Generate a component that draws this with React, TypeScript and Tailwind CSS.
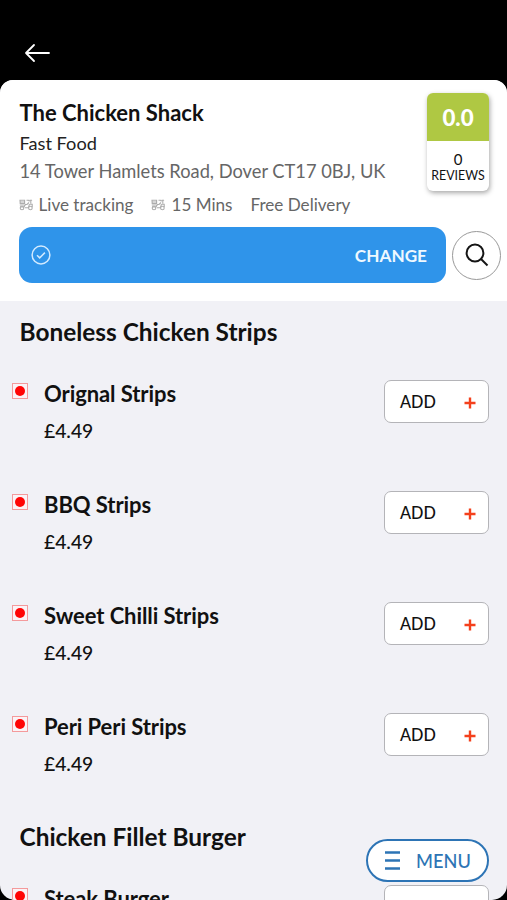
import React from "react";

type MenuItem = { name: string; price: string };
type MenuSection = { title: string; items: MenuItem[] };

const sections: MenuSection[] = [
  {
    title: "Boneless Chicken Strips",
    items: [
      { name: "Orignal Strips", price: "£4.49" },
      { name: "BBQ Strips", price: "£4.49" },
      { name: "Sweet Chilli Strips", price: "£4.49" },
      { name: "Peri Peri Strips", price: "£4.49" },
    ],
  },
  {
    title: "Chicken Fillet Burger",
    items: [{ name: "Steak Burger", price: "£4.49" }],
  },
];

function ScooterIcon() {
  return (
    <svg width="14" height="12" viewBox="0 0 14 12" fill="none" stroke="#adadad" strokeWidth="1.1" className="-ml-px mr-px shrink-0">
      <path d="M1 1.2h4.6v3.3H1.2zM1.2 3h4M7.5 1.2h2l1 1.2M10.5 1.3h2.6M11.8 1.5v3M6 5.5h2l2-2M.8 6h5M1 8h4l1.5-2.5M6 8.7h3.5l1-3.7M11 5.2h2.2v3" />
      <circle cx="3" cy="9" r="1.8" />
      <circle cx="11.4" cy="9" r="1.8" />
    </svg>
  );
}

function AddButton() {
  return (
    <button className="mt-[18px] flex h-[43px] w-[105px] shrink-0 items-center justify-between rounded-[7px] border border-[#b4b4b8] bg-white pl-[15px] pr-3">
      <span className="pt-[2px] text-[16.3px] font-medium leading-none text-[#111]">ADD</span>
      <svg width="12" height="12" viewBox="0 0 12 12" stroke="#f4401c" strokeWidth="2.4" className="mt-[3px]">
        <path d="M6 .5v11M.5 6h11" />
      </svg>
    </button>
  );
}

function ItemRow({ item }: { item: MenuItem }) {
  return (
    <div className="flex h-[111px] pl-3 pr-[18px]">
      <span className="mt-[21px] flex size-4 shrink-0 items-center justify-center border border-[#f49a9c] bg-[#fbf3f6]">
        <span className="size-[10px] rounded-full bg-[#ff0505]" />
      </span>
      <div className="ml-4 flex-1 pt-[18px]">
        <div className="whitespace-nowrap text-[22px] font-bold leading-[28px] tracking-[-0.08px]">{item.name}</div>
        <div className="mt-[9px] text-[19.3px] font-medium leading-[28px]">{item.price}</div>
      </div>
      <AddButton />
    </div>
  );
}

export default function App() {
  return (
    <div className="h-[900px] w-[507px] overflow-hidden bg-black font-[Lato,sans-serif] text-[#111]">
      <header className="flex h-20 items-start pl-6 pt-[43px]">
        <svg width="27" height="20" viewBox="0 0 27 20" fill="none" stroke="#fff" strokeWidth="1.8" strokeLinecap="round" strokeLinejoin="round">
          <path d="M25 10H2M10 2L2 10l8 8" />
        </svg>
      </header>
      <main className="relative h-[820px] overflow-hidden rounded-t-[13px] rounded-b-[15px] bg-[#f1f1f6]">
        <section className="h-[221px] bg-white pl-5 pr-[6px] pt-[13px]">
          <div className="flex h-[134px] justify-between">
            <div className="-ml-[0.5px] whitespace-nowrap">
              <h1 className="mt-[6px] text-[22px] font-bold leading-[28px]">The Chicken Shack</h1>
              <div className="mt-[2px] text-[18.2px] leading-[28px] text-[#222]">Fast Food</div>
              <div className="text-[18.3px] leading-[28px] text-[#666]">14 Tower Hamlets Road, Dover CT17 0BJ, UK</div>
              <div className="mt-[6px] flex items-center text-[17.1px] leading-[28px] text-[#666]">
                <ScooterIcon />
                <span className="ml-[5px] w-[113px]">Live tracking</span>
                <ScooterIcon />
                <span className="ml-[6px] w-[79px]">15 Mins</span>
                <span>Free Delivery</span>
              </div>
            </div>
            <div className="mr-3 h-[98px] w-[62px] overflow-hidden rounded-[6px] bg-white text-center shadow-[1px_2px_5px_rgba(0,0,0,0.35)]">
              <div className="h-[48px] bg-[#afc843] text-[22.3px] font-black leading-[50px] text-white">0.0</div>
              <div className="pt-[10px] text-[15px] leading-[17px]">0</div>
              <div className="text-[12.4px] leading-[15px]">REVIEWS</div>
            </div>
          </div>
          <div className="flex items-center justify-between">
            <div className="-ml-px flex h-14 w-[427px] items-center justify-between rounded-[13px] bg-[#2f94ea] pl-3 pr-[19px]">
              <svg width="20" height="20" viewBox="0 0 20 20" fill="none" stroke="#d2eaff" strokeWidth="1.5">
                <circle cx="10" cy="10" r="8.9" />
                <path d="M6 10.3l2.7 2.6 5.2-5.3" />
              </svg>
              <span className="pt-px text-[17.2px] font-bold text-[#eef8ff]">CHANGE</span>
            </div>
            <button className="flex size-[49px] items-center justify-center rounded-full border border-[#999] bg-white">
              <svg width="24" height="24" viewBox="0 0 24 24" fill="none" stroke="#151515" strokeWidth="2">
                <circle cx="10" cy="10" r="8.4" />
                <path d="M16 16l6.5 6.5" />
              </svg>
            </button>
          </div>
        </section>
        {sections.map((section) => (
          <section key={section.title}>
            <div className="h-[61px] pl-[19.5px] pt-[13px]">
              <h2 className="h-[34px] overflow-hidden whitespace-nowrap text-[24.4px] font-bold leading-[36px]">{section.title}</h2>
            </div>
            {section.items.map((item) => (
              <ItemRow key={item.name} item={item} />
            ))}
          </section>
        ))}
        <button className="absolute bottom-[18px] right-[18px] flex h-[43px] w-[123px] items-center rounded-full border-2 border-[#2d74b5] bg-white pl-[17px] text-[#2d74b5]">
          <svg width="15" height="19" viewBox="0 0 15 19" stroke="currentColor" strokeWidth="2.6">
            <path d="M0 1.5h15M0 9.5h15M0 17.5h15" />
          </svg>
          <span className="ml-[16px] pt-[2px] text-[18.2px] font-medium leading-none">MENU</span>
        </button>
      </main>
    </div>
  );
}
